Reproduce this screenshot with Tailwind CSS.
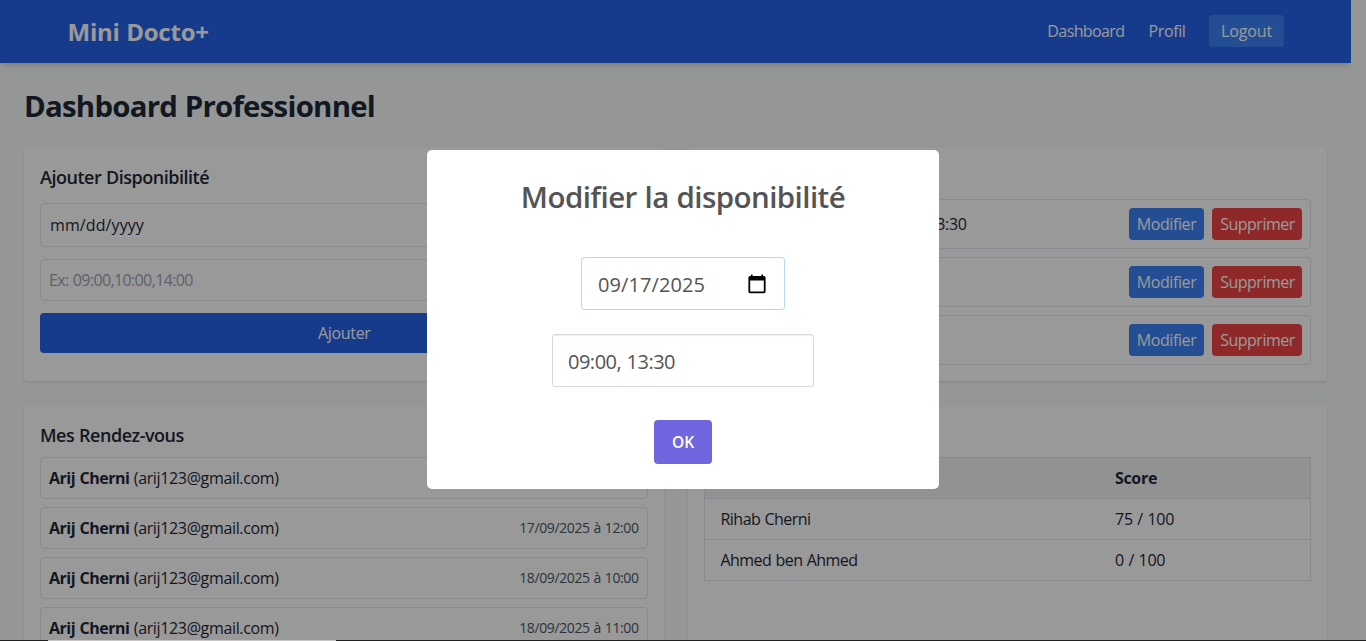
<!DOCTYPE html>
<html lang="fr">
<head>
<meta charset="utf-8">
<title>Mini Docto+</title>
<script src="https://cdn.jsdelivr.net/npm/@tailwindcss/browser@4"></script>
</head>
<body>
<div class="relative h-[641px] overflow-hidden bg-[#f9fafb] font-['Open_Sans','Noto_Sans',sans-serif] text-base text-[#1f2937] [word-spacing:0.04em]">
  <div class="h-[641px] w-[1351px] overflow-hidden">
    <nav class="h-[63px] bg-[#2563eb] pt-[15px] text-white shadow-md">
      <div class="mx-auto flex h-8 max-w-[1280px] items-center justify-between px-8">
        <div class="pt-0.5 text-2xl leading-8 font-bold tracking-[-0.01em]">Mini Docto+</div>
        <div class="flex items-center gap-6">
          <a class="tracking-[-0.038em]">Dashboard</a>
          <a class="-mr-px tracking-[-0.023em]">Profil</a>
          <button class="h-8 w-[75px] rounded bg-[#3b82f6] pl-px tracking-[-0.009em]">Logout</button>
        </div>
      </div>
    </nav>

    <main class="p-6">
      <h1 class="mb-6 pt-0.5 text-[29.4px] leading-[34px] font-bold tracking-[-0.0255em]">Dashboard Professionnel</h1>
      <div class="grid grid-cols-2 gap-6">
        <section class="h-[234px] rounded bg-white p-4 shadow">
          <h2 class="mb-3 text-lg font-semibold tracking-[-0.027em]">Ajouter Disponibilité</h2>
          <div class="flex flex-col gap-3">
            <div class="flex h-11 items-center rounded border border-[#e5e7eb] px-[9px] text-[#1f2937] tracking-[0.006em]">mm/dd/yyyy</div>
            <div class="flex h-[42px] items-center rounded border border-[#e5e7eb] px-2 text-[#9ca3af] tracking-[-0.039em]">Ex: 09:00,10:00,14:00</div>
            <button class="h-10 rounded bg-[#2563eb] pl-px text-white tracking-[-0.019em]">Ajouter</button>
          </div>
        </section>

        <section class="h-[234px] rounded bg-white p-4 pt-[52px] shadow">
          <ul class="flex flex-col gap-2">
            <li class="flex items-center justify-between rounded border border-[#e5e7eb] p-2">
              <span class="w-[254px] text-right tracking-[-0.022em]">13:30</span>
              <div class="flex gap-2 text-white">
                <button class="h-8 w-[75px] rounded bg-[#3b82f6] tracking-[-0.024em]">Modifier</button>
                <button class="h-8 w-[90px] rounded bg-[#ef4444] pl-px tracking-[-0.031em]">Supprimer</button>
              </div>
            </li>
            <li class="flex items-center justify-end rounded border border-[#e5e7eb] p-2">
              <div class="flex gap-2 text-white">
                <button class="h-8 w-[75px] rounded bg-[#3b82f6] tracking-[-0.024em]">Modifier</button>
                <button class="h-8 w-[90px] rounded bg-[#ef4444] pl-px tracking-[-0.031em]">Supprimer</button>
              </div>
            </li>
            <li class="flex items-center justify-end rounded border border-[#e5e7eb] p-2">
              <div class="flex gap-2 text-white">
                <button class="h-8 w-[75px] rounded bg-[#3b82f6] tracking-[-0.024em]">Modifier</button>
                <button class="h-8 w-[90px] rounded bg-[#ef4444] pl-px tracking-[-0.031em]">Supprimer</button>
              </div>
            </li>
          </ul>
        </section>

        <section class="rounded bg-white p-4 shadow">
          <h2 class="mb-2 text-lg font-semibold tracking-[-0.027em]">Mes Rendez-vous</h2>
          <ul class="flex flex-col gap-2">
            <li class="flex h-[42px] items-center rounded border border-[#e5e7eb] px-2">
              <span class="tracking-[-0.022em]"><b class="font-bold tracking-[-0.0305em]">Arij Cherni</b> (arij123@gmail.com)</span>
            </li>
            <li class="flex h-[42px] items-center justify-between rounded border border-[#e5e7eb] px-2">
              <span class="tracking-[-0.022em]"><b class="font-bold tracking-[-0.0305em]">Arij Cherni</b> (arij123@gmail.com)</span>
              <span class="text-sm tracking-[-0.028em] text-[#4b5563]">17/09/2025 à 12:00</span>
            </li>
            <li class="flex h-[42px] items-center justify-between rounded border border-[#e5e7eb] px-2">
              <span class="tracking-[-0.022em]"><b class="font-bold tracking-[-0.0305em]">Arij Cherni</b> (arij123@gmail.com)</span>
              <span class="text-sm tracking-[-0.028em] text-[#4b5563]">18/09/2025 à 10:00</span>
            </li>
            <li class="flex h-[42px] items-center justify-between rounded border border-[#e5e7eb] px-2">
              <span class="tracking-[-0.022em]"><b class="font-bold tracking-[-0.0305em]">Arij Cherni</b> (arij123@gmail.com)</span>
              <span class="text-sm tracking-[-0.028em] text-[#4b5563]">18/09/2025 à 11:00</span>
            </li>
          </ul>
        </section>

        <section class="rounded bg-white p-4 pt-[52px] shadow">
          <div class="border border-[#e5e7eb]">
            <div class="flex h-[41px] items-center border-b border-[#e5e7eb] bg-[#f3f4f6] pl-[410.5px] font-bold tracking-[-0.0208em]">Score</div>
            <div class="flex h-[41px] items-center border-b border-[#e5e7eb] pl-4">
              <span class="w-[394.5px] tracking-[-0.033em]">Rihab Cherni</span><span class="tracking-[-0.017em]">75 / 100</span>
            </div>
            <div class="flex h-10 items-center pl-4">
              <span class="w-[394.5px] tracking-[-0.034em]">Ahmed ben Ahmed</span><span class="tracking-[-0.017em]">0 / 100</span>
            </div>
          </div>
        </section>
      </div>
    </main>
  </div>

  <div class="absolute inset-0 flex items-start justify-center bg-black/40 pt-[150px]">
    <div class="flex h-[339px] w-[512px] flex-col items-center rounded-[5px] bg-white text-[#545454]">
      <h2 class="mt-[29px] text-[29.5px] leading-9 font-semibold tracking-[-0.019em]">Modifier la disponibilité</h2>
      <div class="mt-[42px] flex h-[53px] w-[204px] items-center justify-between rounded-[3px] border border-[#b4dbed] pt-[3px] pr-[18px] pl-4 text-xl">
        <span class="tracking-[0.004em]">09/17/2025</span>
        <svg class="mb-0.5 h-5 w-[18px]" viewBox="0 0 18 20" fill="none">
          <path fill="#000" fill-rule="evenodd" d="M3 .5h1.6v1.5h8.8V.5H15v1.5h1a1.7 1.7 0 0 1 1.6 1.7v13.9A1.6 1.6 0 0 1 16 19.2H2a1.6 1.6 0 0 1-1.6-1.6V3.7A1.7 1.7 0 0 1 2 2h1zM2.200 6.500v11h13.600v-11z"/>
        </svg>
      </div>
      <div class="mt-6 flex h-[53px] w-[262px] items-center rounded-[3px] border border-[#d9d9d9] px-[15px] pt-[3px] text-xl tracking-[-0.025em] shadow-[inset_0_1px_1px_rgba(0,0,0,0.06)]">09:00, 13:30</div>
      <button class="mt-[33px] h-11 w-[58px] rounded bg-[#7066e0] pt-px text-[15.5px] font-semibold text-white">OK</button>
    </div>
  </div>

  <div class="absolute bottom-0 left-0 flex h-px w-full bg-[#202020]">
    <div class="ml-12 w-72 bg-[#c8c6c5]"></div>
  </div>
</div>
</body>
</html>
